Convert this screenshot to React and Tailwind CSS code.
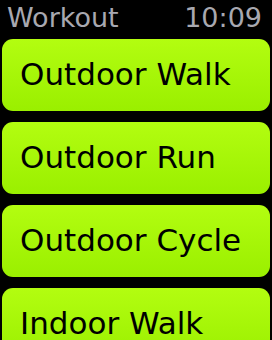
export default function App() {
  const items = ['Outdoor Walk', 'Outdoor Run', 'Outdoor Cycle', 'Indoor Walk']

  return (
    <div
      className="w-[272px] h-[340px] bg-black overflow-hidden px-[2px]"
      style={{ fontFamily: '"DejaVu Sans", sans-serif' }}
    >
      {/* Status bar */}
      <div className="flex items-center justify-between h-[38px] pl-[5px] pr-[8px] pb-[3px] text-[27px] leading-none text-[#a8a8b0]">
        <span>Workout</span>
        <span>10:09</span>
      </div>

      {/* Workout list */}
      <div className="flex flex-col gap-[11px] pt-[1px]">
        {items.map((label) => (
          <div
            key={label}
            className="h-[72px] shrink-0 rounded-[11px] bg-gradient-to-b from-[#b3fd10] to-[#9aef00] flex items-center pl-[18px] pb-[1px] text-[31px] leading-none text-black"
          >
            <span className="whitespace-nowrap">{label}</span>
          </div>
        ))}
      </div>
    </div>
  )
}
